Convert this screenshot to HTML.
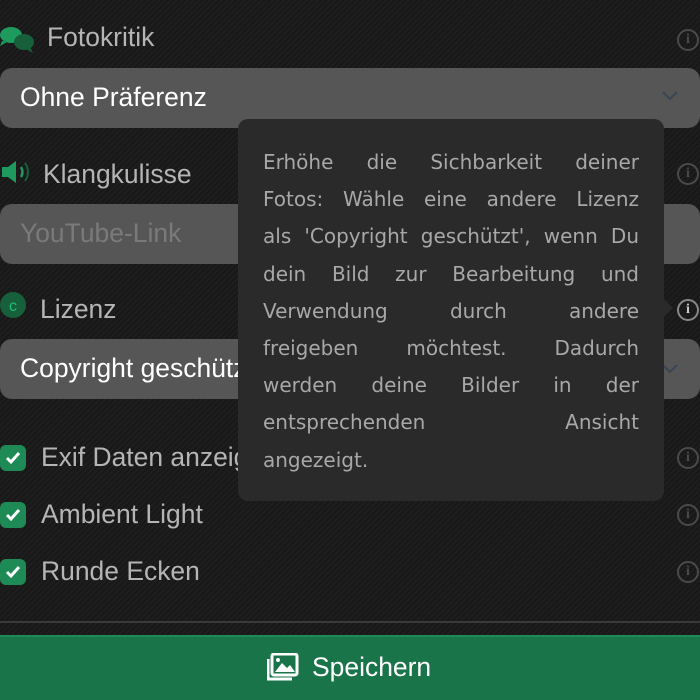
<!DOCTYPE html>
<html><head><meta charset="utf-8"><style>
*{margin:0;padding:0;box-sizing:border-box}
body{width:700px;height:700px;overflow:hidden;position:relative;font-family:"Liberation Sans",sans-serif;
background:#1b1b1b repeating-linear-gradient(135deg,#1e1e1e 0 2px,#181818 2px 4px);color:#aaa}
.lbl{position:absolute;font-size:27px;color:#b5b5b5;transform:scaleX(0.98);transform-origin:left}
.field{position:absolute;left:0;width:700px;height:60px;background:#565656;border-radius:12px}
.field span{position:absolute;left:20px;top:14px;font-size:27px;transform:scaleX(0.98);transform-origin:left}
.info{position:absolute;left:677px;width:22px;height:22px;border:2px solid #4a4a4a;border-radius:50%;color:#4a4a4a;font:bold 14px "Liberation Serif",serif;text-align:center;line-height:18px}
.cb{position:absolute;left:0;width:26px;height:26px;background:#1e8a55;border-radius:6px}
.tip{position:absolute;left:238px;top:119px;width:426px;height:382px;background:#2a2a2a;border-radius:10px;padding:25px 25px 0 25px;font-size:20px;line-height:37.2px;color:#a8a8a8;font-family:"DejaVu Sans",sans-serif}
.tip div{text-align:justify;text-align-last:justify;white-space:nowrap}
.tip div:last-child{text-align-last:left}
.tip:after{content:"";position:absolute;right:-9px;top:180px;border:9px solid transparent;border-left-color:#2a2a2a;border-right:0}
</style></head><body>
<svg style="position:absolute;left:0;top:26px" width="36" height="28"><ellipse cx="11" cy="9" rx="11" ry="8" fill="#1f9a5f"/><path d="M2 15 L0 20 L7 16Z" fill="#1f9a5f"/><ellipse cx="24" cy="16" rx="10" ry="8" fill="#17603c"/><path d="M30 21 L33 27 L26 23Z" fill="#17603c"/></svg>
<div class="lbl" style="left:47px;top:22px">Fotokritik</div>
<div class="info" style="top:29px">i</div>
<div class="field" style="top:68px"><span style="color:#fff">Ohne Präferenz</span>
<svg style="position:absolute;left:661px;top:22px" width="18" height="12"><path d="M2 2 L9 9 L16 2" stroke="#3a4555" stroke-width="2" fill="none"/></svg></div>
<svg style="position:absolute;left:0;top:159px" width="32" height="26"><path d="M2 8 H8 L16 2 V24 L8 18 H2Z" fill="#1f9a5f"/><path d="M21 8 Q24 13 21 18" stroke="#1f9a5f" stroke-width="2.5" fill="none"/><path d="M25 4 Q31 13 25 22" stroke="#17603c" stroke-width="2" fill="none"/></svg>
<div class="lbl" style="left:43px;top:159px">Klangkulisse</div>
<div class="info" style="top:163px">i</div>
<div class="field" style="top:204px"><span style="color:#7a7a7a">YouTube-Link</span></div>
<svg style="position:absolute;left:0;top:292px" width="26" height="26"><circle cx="13" cy="13" r="13" fill="#17603c"/><text x="13" y="19" font-size="16" fill="#1fbf75" text-anchor="middle" font-family="Liberation Sans">c</text></svg>
<div class="lbl" style="left:40px;top:294px">Lizenz</div>
<div class="info" style="top:299px;border-color:#888;color:#ccc">i</div>
<div class="field" style="top:339px"><span style="color:#fff">Copyright geschützt</span>
<svg style="position:absolute;left:661px;top:24px" width="18" height="12"><path d="M2 2 L9 9 L16 2" stroke="#3a4555" stroke-width="2" fill="none"/></svg></div>
<div class="cb" style="top:445px"><svg width="26" height="26"><path d="M7 13 L11 17 L19 8" stroke="#fff" stroke-width="3" fill="none"/></svg></div>
<div class="lbl" style="left:41px;top:442px">Exif Daten anzeigen</div>
<div class="info" style="top:447px">i</div>
<div class="cb" style="top:502px"><svg width="26" height="26"><path d="M7 13 L11 17 L19 8" stroke="#fff" stroke-width="3" fill="none"/></svg></div>
<div class="lbl" style="left:41px;top:499px">Ambient Light</div>
<div class="info" style="top:504px">i</div>
<div class="cb" style="top:559px"><svg width="26" height="26"><path d="M7 13 L11 17 L19 8" stroke="#fff" stroke-width="3" fill="none"/></svg></div>
<div class="lbl" style="left:41px;top:556px">Runde Ecken</div>
<div class="info" style="top:561px">i</div>
<div style="position:absolute;left:0;top:621px;width:700px;height:2px;background:#3a3a3a"></div>
<div style="position:absolute;left:0;top:635px;width:700px;height:65px;background:#19744a;border-top:2px solid #1e8a55"></div>
<svg style="position:absolute;left:267px;top:653px" width="32" height="28"><rect x="5" y="1" width="25" height="21" rx="2" stroke="#fff" stroke-width="3" fill="none"/><path d="M8 19 L15 10 L20 15 L23 12 L28 19Z" fill="#fff"/><circle cx="11" cy="7" r="2" fill="#fff"/><path d="M1 6 V26 H25" stroke="#fff" stroke-width="3" fill="none"/></svg>
<div class="lbl" style="left:312px;top:652px;color:#fff">Speichern</div>
<div class="tip"><div>Erhöhe die Sichbarkeit deiner</div><div>Fotos: Wähle eine andere Lizenz</div><div>als 'Copyright geschützt', wenn Du</div><div>dein Bild zur Bearbeitung und</div><div>Verwendung durch andere</div><div>freigeben möchtest. Dadurch</div><div>werden deine Bilder in der</div><div>entsprechenden Ansicht</div><div>angezeigt.</div></div>
</body></html>
